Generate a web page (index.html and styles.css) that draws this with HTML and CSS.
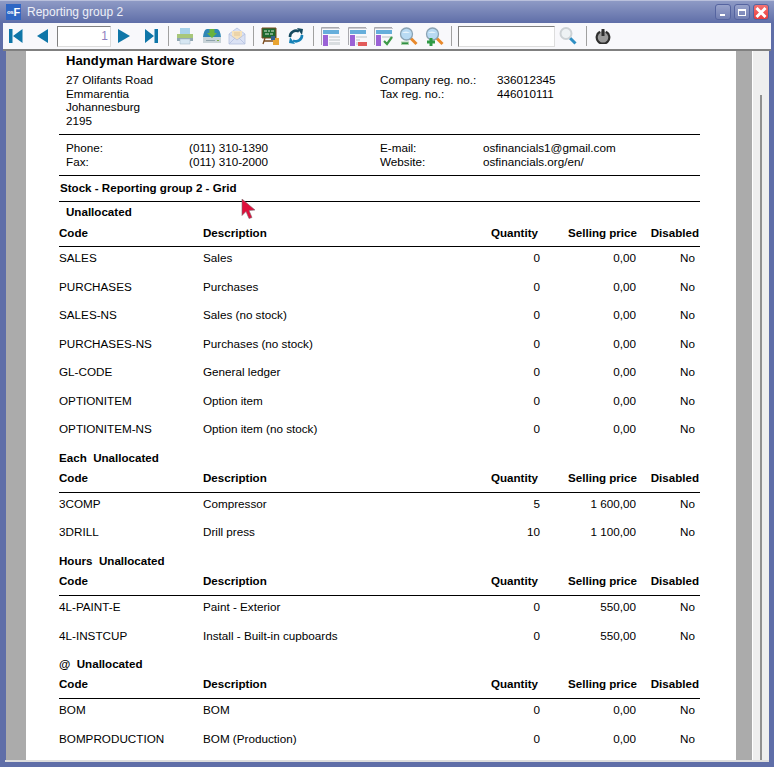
FILE: index.html
```html
<!DOCTYPE html>
<html lang="en">
<head>
    <meta charset="UTF-8">
    <meta name="viewport" content="width=device-width, initial-scale=1.0">
    <title>Reporting group 2</title>
    <link rel="stylesheet" href="styles.css">
</head>
<body>
<div class="window">
    <div class="titlebar">
        <div class="app-icon"><span class="app-os">os</span><span class="app-f">F</span></div>
        <div class="title">Reporting group 2</div>
        <div class="winbtn"><span class="glyph-min"></span></div>
        <div class="winbtn"><span class="glyph-max"></span></div>
        <div class="winbtn winbtn-close">
            <svg width="12" height="11" viewBox="0 0 12 11"><path d="M1.500 1L10.500 10M10.500 1L1.500 10" stroke="#fff" stroke-width="3"/></svg>
        </div>
    </div>

    <div class="toolbar">
        <div class="tool"><svg width="16" height="16" viewBox="0 0 16 16"><path d="M1 1h3.500v14H1zM14.500 1v14L5 8z" fill="#0f76a8"/></svg></div>
        <div class="tool tool-wide"><svg width="16" height="16" viewBox="0 0 16 16"><path d="M13 1v14L2 8z" fill="#0f76a8"/></svg></div>
        <input class="page-input" type="text" value="1">
        <div class="tool"><svg width="16" height="16" viewBox="0 0 16 16"><path d="M2 1v14l12-7z" fill="#0f76a8"/></svg></div>
        <div class="tool tool-wide"><svg width="16" height="16" viewBox="0 0 16 16"><path d="M2 1v14l9-7zM11.500 1H15v14h-3.500z" fill="#0f76a8"/></svg></div>
        <div class="sep"></div>
        <div class="tool"><svg width="18" height="18" viewBox="0 0 18 18"><path d="M4 1h10v6H4z" fill="#a8d2ea"/><path d="M1 7h16v4H1z" fill="#a8c77a"/><path d="M1 11h16v3H1z" fill="#8fa6b2"/><path d="M4 12h10v5H4z" fill="#d6e6f2" stroke="#a9bccb" stroke-width=".6"/></svg></div>
        <div class="tool tool-wide"><svg width="18" height="18" viewBox="0 0 18 18"><path d="M0 10Q1 2 4 2h10q3 0 4 8z" fill="#2f86b4"/><path d="M0 10h18v6H0z" fill="#c9d3d8"/><path d="M3 13h9v1H3z" fill="#8fa3ad"/><path d="M14 13h2v1h-2z" fill="#7fb24a"/><path d="M6.500 2h5v4H14l-5 5-5-5h2.500z" fill="#69b23c"/></svg></div>
        <div class="tool tool-narrow"><svg width="18" height="18" viewBox="0 0 18 18"><path d="M1 7l8-6 8 6v10H1z" fill="#dbe2f4" stroke="#b4c0e0" stroke-width=".8"/><path d="M4 4h10v6l-5 3-5-3z" fill="#f6e2bb"/><path d="M6 6h6M6 8h6" stroke="#d9b98a" stroke-width=".7"/><path d="M1 7l8 6 8-6M1 17l6-6M17 17l-6-6" fill="none" stroke="#b4c0e0" stroke-width=".8"/></svg></div>
        <div class="sep"></div>
        <div class="tool"><svg width="18" height="18" viewBox="0 0 18 18"><path d="M1 1h14v10H1z" fill="#1c6a30" stroke="#7a4a1e"/><path d="M3 4h3M7 4h2M10 4h3M4 7h4M9 7h3" stroke="#dcecd8"/><path d="M4 11l-2 6M12 11l2 6M3 14h10" stroke="#7a4a1e" stroke-width="1.300"/><path d="M12 11h6v7h-6z" fill="#e9a431"/><path d="M10 9h4v4h-4z" fill="#34628f"/></svg></div>
        <div class="tool"><svg width="18" height="18" viewBox="0 0 18 18"><path d="M3 10a6 6 0 0 1 9-5.500" fill="none" stroke="#14495f" stroke-width="2.600"/><path d="M15 8a6 6 0 0 1-9 5.500" fill="none" stroke="#1682b8" stroke-width="2.600"/><path d="M10 1l6 1-1 6z" fill="#14495f"/><path d="M8 17l-6-1 1-6z" fill="#1682b8"/></svg></div>
        <div class="sep"></div>
        <div class="tool"><svg width="19" height="19" viewBox="0 0 19 19"><path d="M.500 18V.500H18" fill="none" stroke="#a9a9ae"/><path d="M1 1h18v1H1z" fill="#c9c9cf"/><path d="M2 3h16v4H2z" fill="#66aedb"/><path d="M2 8h5v11H2z" fill="#9a62d6"/><path d="M8 9h11v2H8zM8 12h11v2H8zM8 15h11v3H8z" fill="#d9dde0"/></svg></div>
        <div class="tool tool-wider"><svg width="19" height="19" viewBox="0 0 19 19"><path d="M.500 18V.500H18" fill="none" stroke="#a9a9ae"/><path d="M1 1h18v1H1z" fill="#c9c9cf"/><path d="M2 3h16v4H2z" fill="#66aedb"/><path d="M2 8h5v11H2z" fill="#9a62d6"/><path d="M8 9h11v2H8zM8 12h4v2H8zM8 15h2v3H8z" fill="#d9dde0"/><path d="M10 15h9v4h-9z" fill="#e25b5b"/></svg></div>
        <div class="tool tool-narrow"><svg width="19" height="19" viewBox="0 0 19 19"><path d="M.500 18V.500H18" fill="none" stroke="#a9a9ae"/><path d="M1 1h18v1H1z" fill="#c9c9cf"/><path d="M2 3h16v4H2z" fill="#66aedb"/><path d="M2 8h5v11H2z" fill="#9a62d6"/><path d="M8 9h11v2H8z" fill="#d9dde0"/><path d="M10 14l3 3 5-7" fill="none" stroke="#3f9a4a" stroke-width="2.200"/></svg></div>
        <div class="tool"><svg width="19" height="19" viewBox="0 0 19 19"><path d="M11.500 11l6 6" stroke="#e8892c" stroke-width="3"/><circle cx="7.500" cy="7" r="6" fill="#b8daf3" stroke="#8ba3b4" stroke-width="1.300"/><path d="M3 6a5 4 0 0 1 8 0z" fill="#e6f3fb"/><path d="M2 14.500h8V18H2z" fill="#a9d0a8"/><path d="M3 15.500h6V17H3z" fill="#2f8f46"/></svg></div>
        <div class="tool"><svg width="19" height="19" viewBox="0 0 19 19"><path d="M11.500 11l6 6" stroke="#e8892c" stroke-width="3"/><circle cx="7.500" cy="7" r="6" fill="#b8daf3" stroke="#8ba3b4" stroke-width="1.300"/><path d="M3 6a5 4 0 0 1 8 0z" fill="#e6f3fb"/><path d="M4.500 11h3v2.500H10v3H7.500V19h-3v-2.500H2v-3h2.500z" fill="#2f9a46"/></svg></div>
        <div class="sep"></div>
        <input class="search-input" type="text">
        <div class="tool"><svg width="18" height="18" viewBox="0 0 18 18"><path d="M10.500 10.500l6 6" stroke="#2f8fc4" stroke-width="3"/><circle cx="7" cy="6.500" r="5.500" fill="#eef2f4" stroke="#cdd2d5" stroke-width="2"/></svg></div>
        <div class="sep sep-narrow"></div>
        <div class="tool"><svg width="16" height="16" viewBox="0 0 16 16"><circle cx="8" cy="9" r="6" fill="#9a9a9a"/><path d="M5 3.800a6.300 6.300 0 1 0 6 0" fill="none" stroke="#2e2e2e" stroke-width="2.200"/><path d="M8 1v7" stroke="#2e2e2e" stroke-width="3"/></svg></div>
    </div>

    <div class="content">
        <div class="gutter gutter-left"></div>
        <div class="page">
            <div class="report">
                <div class="company">Handyman Hardware Store</div>
                <div class="info info-address">
                    <div>27 Olifants Road<br>Emmarentia<br>Johannesburg<br>2195</div>
                    <div class="reg-labels">Company reg. no.:<br>Tax reg. no.:</div>
                    <div>336012345<br>446010111</div>
                </div>
                <div class="info info-contact">
                    <div>Phone:<br>Fax:</div>
                    <div>(011) 310-1390<br>(011) 310-2000</div>
                    <div>E-mail:<br>Website:</div>
                    <div>osfinancials1@gmail.com<br>osfinancials.org/en/</div>
                </div>
                <div class="report-title">Stock - Reporting group 2 - Grid</div>

                <div class="group group-first">Unallocated</div>
                <div class="row row-head"><span>Code</span><span>Description</span><span class="num">Quantity</span><span class="num">Selling price</span><span class="num">Disabled</span></div>
                <div class="row"><span>SALES</span><span>Sales</span><span class="num">0</span><span class="num">0,00</span><span class="num">No</span></div>
                <div class="row"><span>PURCHASES</span><span>Purchases</span><span class="num">0</span><span class="num">0,00</span><span class="num">No</span></div>
                <div class="row"><span>SALES-NS</span><span>Sales (no stock)</span><span class="num">0</span><span class="num">0,00</span><span class="num">No</span></div>
                <div class="row"><span>PURCHASES-NS</span><span>Purchases (no stock)</span><span class="num">0</span><span class="num">0,00</span><span class="num">No</span></div>
                <div class="row"><span>GL-CODE</span><span>General ledger</span><span class="num">0</span><span class="num">0,00</span><span class="num">No</span></div>
                <div class="row"><span>OPTIONITEM</span><span>Option item</span><span class="num">0</span><span class="num">0,00</span><span class="num">No</span></div>
                <div class="row"><span>OPTIONITEM-NS</span><span>Option item (no stock)</span><span class="num">0</span><span class="num">0,00</span><span class="num">No</span></div>

                <div class="group">Each&nbsp; Unallocated</div>
                <div class="row row-head"><span>Code</span><span>Description</span><span class="num">Quantity</span><span class="num">Selling price</span><span class="num">Disabled</span></div>
                <div class="row"><span>3COMP</span><span>Compressor</span><span class="num">5</span><span class="num">1 600,00</span><span class="num">No</span></div>
                <div class="row"><span>3DRILL</span><span>Drill press</span><span class="num">10</span><span class="num">1 100,00</span><span class="num">No</span></div>

                <div class="group">Hours&nbsp; Unallocated</div>
                <div class="row row-head"><span>Code</span><span>Description</span><span class="num">Quantity</span><span class="num">Selling price</span><span class="num">Disabled</span></div>
                <div class="row"><span>4L-PAINT-E</span><span>Paint - Exterior</span><span class="num">0</span><span class="num">550,00</span><span class="num">No</span></div>
                <div class="row"><span>4L-INSTCUP</span><span>Install - Built-in cupboards</span><span class="num">0</span><span class="num">550,00</span><span class="num">No</span></div>

                <div class="group">@&nbsp; Unallocated</div>
                <div class="row row-head"><span>Code</span><span>Description</span><span class="num">Quantity</span><span class="num">Selling price</span><span class="num">Disabled</span></div>
                <div class="row"><span>BOM</span><span>BOM</span><span class="num">0</span><span class="num">0,00</span><span class="num">No</span></div>
                <div class="row"><span>BOMPRODUCTION</span><span>BOM (Production)</span><span class="num">0</span><span class="num">0,00</span><span class="num">No</span></div>
            </div>
            <svg class="cursor" width="16" height="20" viewBox="0 0 16 20"><path d="M1 0l13 11-6 .5 3 7-3 1-3-7-4 4z" fill="#e0103c" stroke="#7a6a70" stroke-width=".6"/></svg>
        </div>
        <div class="gutter gutter-right"></div>
        <div class="scrollbar"><div class="thumb"></div></div>
    </div>
</div>
</body>
</html>
```

FILE: styles.css
```css
html, body {
    margin: 0;
    padding: 0;
}
body {
    font-family: "Liberation Sans", Arial, sans-serif;
    font-size: 11.700px;
    color: #000;
    background-color: #5f6ea8;
}
.window {
    display: flex;
    flex-direction: column;
    height: 767px;
    overflow: hidden;
    box-sizing: border-box;
    padding: 0 5px 5px 5px;
    background-color: #5f6ea8;
    border-top: 1px solid #b9c0dc;
}
.titlebar {
    display: flex;
    align-items: center;
    height: 22px;
    margin: 0 -5px;
    padding: 0 5px 0 6px;
    background: linear-gradient(#8e9ac5, #5f6ea8);
}
.app-icon {
    display: flex;
    align-items: center;
    flex: none;
    width: 15px;
    height: 16px;
    margin-right: 6px;
    background-color: #2f66c4;
    color: #fff;
    font-weight: bold;
    line-height: 15px;
}
.app-os {
    font-size: 6px;
    letter-spacing: -0.300px;
    margin-left: 1px;
}
.app-f {
    font-size: 11px;
}
.title {
    flex: 1;
    color: #eef0f8;
    font-size: 12px;
}
.winbtn {
    display: flex;
    align-items: center;
    justify-content: center;
    box-sizing: border-box;
    width: 16px;
    height: 16px;
    margin-left: 3px;
    border: 1px solid #5564a0;
    border-radius: 3px;
    background: linear-gradient(#99a3cb, #727fb3);
}
.winbtn-close {
    background: linear-gradient(#f57272, #ea3c3c);
}
.glyph-min {
    width: 5px;
    height: 2px;
    margin-top: 6px;
    margin-right: 2px;
    background-color: #fff;
}
.glyph-max {
    box-sizing: border-box;
    width: 8px;
    height: 7px;
    border: 2px solid #fff;
    border-width: 2px 1px 1px 1px;
}
.toolbar {
    display: flex;
    align-items: center;
    height: 26px;
    margin: 0 -2px;
    background-color: #f8f8fb;
    border-bottom: 2px solid #808080;
}
.tool {
    display: flex;
    align-items: center;
    justify-content: center;
    flex: none;
    width: 26px;
    height: 24px;
}
.tool-wide {
    width: 27px;
}
.tool-wider {
    width: 28px;
}
.tool-narrow {
    width: 24px;
}
.sep {
    flex: none;
    width: 1px;
    height: 20px;
    margin: 0 3px 0 4px;
    background-color: #a0a0a0;
}
.sep-narrow {
    margin-left: 5px;
}
.page-input, .search-input {
    flex: none;
    box-sizing: border-box;
    height: 21px;
    padding: 0 2px;
    font-family: "Liberation Sans", Arial, sans-serif;
    font-size: 12px;
    text-align: right;
    color: #8f7fc0;
    background-color: #fff;
    border: 1px solid #ddd;
    border-top: 1px solid #808080;
    border-left: 1px solid #808080;
    outline: none;
}
.page-input {
    width: 54px;
    margin-left: 1px;
}
.search-input {
    width: 97px;
    margin-left: 3px;
}
.content {
    flex: 1;
    min-height: 0;
    display: flex;
    overflow: hidden;
    border-bottom: 2px solid #ddd;
}
.gutter {
    flex: none;
    background-color: #ababab;
}
.gutter-left {
    width: 20px;
    margin-left: 1px;
}
.gutter-right {
    width: 16px;
}
.page {
    position: relative;
    flex: 1;
    min-width: 0;
    background-color: #fff;
}
.scrollbar {
    flex: none;
    width: 17px;
    box-sizing: border-box;
    padding-top: 44px;
    display: flex;
    justify-content: center;
    background-color: #eee;
    border-left: 1px solid #fff;
}
.thumb {
    width: 2px;
    height: 665px;
    background-color: #909090;
}
.report {
    width: 641px;
    margin-left: 33px;
}
.company {
    padding: 2px 0 0 7px;
    font-size: 13px;
    font-weight: bold;
    line-height: 15px;
    letter-spacing: 0.100px;
}
.info {
    display: grid;
    line-height: 13.700px;
    padding-left: 7px;
    border-bottom: 1px solid #000;
}
.info-address {
    grid-template-columns: 314px 117px 1fr;
    padding-top: 5px;
    padding-bottom: 6px;
}
.info-contact {
    grid-template-columns: 123px 191px 103px 1fr;
    padding-top: 6px;
    padding-bottom: 7px;
}
.report-title {
    height: 26px;
    box-sizing: border-box;
    padding-left: 1px;
    line-height: 24px;
    font-size: 11.600px;
    font-weight: bold;
    border-bottom: 1px solid #000;
}
.group {
    height: 22.170px;
    line-height: 22px;
    font-size: 11.600px;
    font-weight: bold;
}
.group-first {
    height: 21px;
    line-height: 20px;
    padding-left: 7px;
}
.row {
    display: grid;
    grid-template-columns: 144px 1fr 60px 97px 62px;
    height: 28.500px;
    line-height: 21px;
}
.row-head {
    height: 24px;
    box-sizing: border-box;
    line-height: 18px;
    font-size: 11.600px;
    font-weight: bold;
    border-bottom: 1px solid #000;
}
.group-first + .row-head {
    line-height: 20px;
}
.num {
    text-align: right;
}
.row span:nth-child(3) {
    padding-right: 1px;
}
.row span:nth-child(4) {
    padding-right: 2px;
}
.row span:last-child {
    padding-right: 5px;
}
.row-head span:nth-child(3) {
    padding-right: 3px;
}
.row-head span:nth-child(4) {
    padding-right: 1px;
}
.row-head span:last-child {
    padding-right: 1px;
}
.cursor {
    position: absolute;
    left: 215px;
    top: 148px;
}
```
